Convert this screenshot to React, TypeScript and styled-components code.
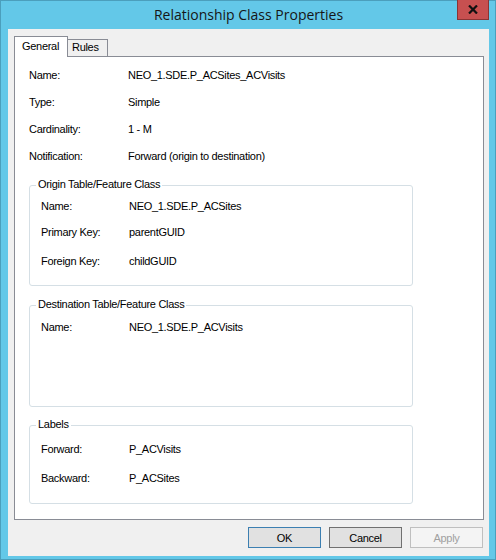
import React from "react"
import styled, { createGlobalStyle } from "styled-components"

const GlobalStyle = createGlobalStyle`
  html, body {
    margin: 0;
    padding: 0;
  }
  body {
    font-family: "Liberation Sans", Arial, sans-serif;
    font-size: 11px;
    letter-spacing: -0.3px;
    color: #000;
  }
`

const Frame = styled.div`
  box-sizing: border-box;
  width: 496px;
  height: 560px;
  display: flex;
  flex-direction: column;
  background: #63c8e8;
  border: 1px solid #4b9fbc;
  padding: 0 6px 3px 7px;
`
const TitleBar = styled.div`
  height: 28px;
  display: grid;
  grid-template-columns: 1fr auto 1fr;
  align-items: start;
`
const Title = styled.div`
  grid-column: 2;
  font-family: "Open Sans", "Noto Sans", sans-serif;
  font-size: 14px;
  letter-spacing: 0;
  line-height: 28px;
  color: #161616;
`
const CloseButton = styled.div`
  grid-column: 3;
  justify-self: end;
  box-sizing: border-box;
  width: 32px;
  height: 20px;
  margin-top: -1px;
  display: flex;
  align-items: center;
  justify-content: center;
  background: #c75050;
  border: 1px solid #8a3434;
  border-top: none;
`
const Client = styled.div`
  flex: 1;
  display: flex;
  flex-direction: column;
  background: #f0f0f0;
  padding: 7px 5px 0 6px;
`
const TabStrip = styled.div`
  display: flex;
  align-items: flex-end;
  height: 20px;
`
const Tab = styled.div<{ $active?: boolean; $w: number; $pl: number }>`
  box-sizing: border-box;
  width: ${({ $w }) => $w}px;
  height: ${({ $active }) => ($active ? 21 : 17)}px;
  line-height: ${({ $active }) => ($active ? 19 : 15)}px;
  padding-left: ${({ $pl }) => $pl}px;
  margin-bottom: ${({ $active }) => ($active ? -1 : 0)}px;
  margin-left: ${({ $active }) => ($active ? 0 : -1)}px;
  position: relative;
  z-index: ${({ $active }) => ($active ? 1 : 0)};
  border: 1px solid #898c95;
  border-bottom: none;
  background: ${({ $active }) => ($active ? "#fff" : "#f0f0f0")};
`
const Panel = styled.div`
  box-sizing: border-box;
  width: 470px;
  height: 464px;
  display: flex;
  flex-direction: column;
  border: 1px solid #898c95;
  background: #fff;
  padding: 5px 0 0 14px;
`
const Row = styled.div<{ $h?: number }>`
  display: flex;
  align-items: center;
  height: ${({ $h = 27 }) => $h}px;
  line-height: 13px;
`
const Label = styled.span<{ $w: number }>`
  width: ${({ $w }) => $w}px;
  flex-shrink: 0;
`
const Group = styled.div<{ $mt: number; $h: number; $pt: number }>`
  box-sizing: border-box;
  position: relative;
  width: 384px;
  height: ${({ $h }) => $h}px;
  margin-top: ${({ $mt }) => $mt}px;
  padding: ${({ $pt }) => $pt}px 0 0 11px;
  border: 1px solid #d5dfe5;
  border-radius: 3px;
`
const Caption = styled.span`
  position: absolute;
  top: -8px;
  left: 6px;
  padding: 0 2px;
  line-height: 13px;
  background: #fff;
`
const ButtonRow = styled.div`
  display: flex;
  justify-content: flex-end;
  gap: 8px;
  margin-top: 7px;
  padding-right: 1px;
`
const Button = styled.div<{ $kind?: "default" | "normal" | "disabled" }>`
  box-sizing: border-box;
  width: 73px;
  height: 21px;
  display: flex;
  align-items: center;
  justify-content: center;
  border: 1px solid
    ${({ $kind = "normal" }) =>
      $kind === "default" ? "#3c7fb1" : $kind === "disabled" ? "#bfbfbf" : "#707070"};
  background: ${({ $kind }) => ($kind === "disabled" ? "#f4f4f4" : "#e1e1e1")};
  color: ${({ $kind }) => ($kind === "disabled" ? "#a0a0a0" : "#000")};
`

const CloseGlyph = () => (
  <svg width="10" height="9" viewBox="0 0 10 9">
    <path d="M1 0.5 L9 8.5 M9 0.5 L1 8.5" stroke="#111" strokeWidth="2.2" />
  </svg>
)

const general = [
  ["Name:", "NEO_1.SDE.P_ACSites_ACVisits"],
  ["Type:", "Simple"],
  ["Cardinality:", "1 - M"],
  ["Notification:", "Forward (origin to destination)"],
]

const App = () => (
  <>
    <GlobalStyle />
    <Frame>
      <TitleBar>
        <Title>Relationship Class Properties</Title>
        <CloseButton>
          <CloseGlyph />
        </CloseButton>
      </TitleBar>
      <Client>
        <TabStrip>
          <Tab $active $w={54} $pl={7}>
            General
          </Tab>
          <Tab $w={41} $pl={4}>
            Rules
          </Tab>
        </TabStrip>
        <Panel>
          {general.map(([label, value]) => (
            <Row key={label}>
              <Label $w={99}>{label}</Label>
              {value}
            </Row>
          ))}

          <Group $mt={15} $h={101} $pt={7}>
            <Caption>Origin Table/Feature Class</Caption>
            <Row $h={26}>
              <Label $w={88}>Name:</Label>
              NEO_1.SDE.P_ACSites
            </Row>
            <Row $h={26}>
              <Label $w={88}>Primary Key:</Label>
              parentGUID
            </Row>
            <Row $h={32}>
              <Label $w={88}>Foreign Key:</Label>
              childGUID
            </Row>
          </Group>

          <Group $mt={19} $h={102} $pt={8}>
            <Caption>Destination Table/Feature Class</Caption>
            <Row $h={26}>
              <Label $w={88}>Name:</Label>
              NEO_1.SDE.P_ACVisits
            </Row>
          </Group>

          <Group $mt={18} $h={79} $pt={10}>
            <Caption>Labels</Caption>
            <Row $h={26}>
              <Label $w={88}>Forward:</Label>
              P_ACVisits
            </Row>
            <Row $h={32}>
              <Label $w={88}>Backward:</Label>
              P_ACSites
            </Row>
          </Group>
        </Panel>
        <ButtonRow>
          <Button $kind="default">OK</Button>
          <Button>Cancel</Button>
          <Button $kind="disabled">Apply</Button>
        </ButtonRow>
      </Client>
    </Frame>
  </>
)

export default App
